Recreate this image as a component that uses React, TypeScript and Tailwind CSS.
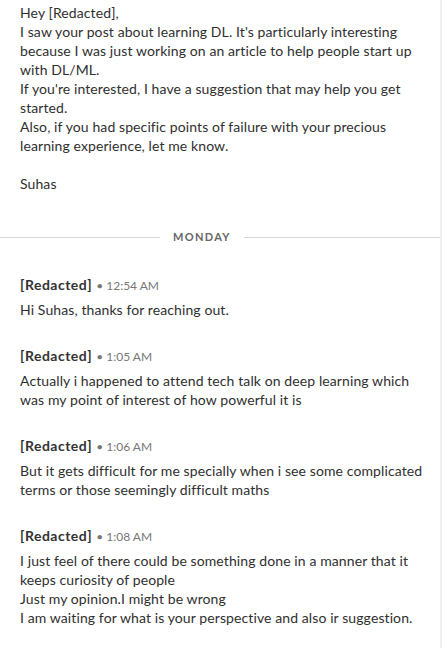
import React from "react";

interface Message {
  author: string;
  time: string;
  body: string;
}

const intro = `Hey [Redacted],
I saw your post about learning DL. It's particularly interesting because I was just working on an article to help people start up with DL/ML.
If you're interested, I have a suggestion that may help you get started.
Also, if you had specific points of failure with your precious learning experience, let me know.

Suhas`;

const messages: Message[] = [
  {
    author: "[Redacted]",
    time: "12:54 AM",
    body: "Hi Suhas, thanks for reaching out.",
  },
  {
    author: "[Redacted]",
    time: "1:05 AM",
    body: "Actually i happened to attend tech talk on deep learning which was my point of interest of how powerful it is",
  },
  {
    author: "[Redacted]",
    time: "1:06 AM",
    body: "But it gets difficult for me specially when i see some complicated terms or those seemingly difficult maths",
  },
  {
    author: "[Redacted]",
    time: "1:08 AM",
    body: "I just feel of there could be something done in a manner that it keeps curiosity of people\nJust my opinion.I might be wrong\nI am waiting for what is your perspective and also ir suggestion.",
  },
];

function App() {
  return (
    <div
      className="flex h-[648px] w-[442px] overflow-hidden bg-white text-[#2f2f2f]"
      style={{ fontFamily: "Lato, 'Open Sans', sans-serif" }}
    >
      <div className="flex-1">
        {/* first message, sent before the day break */}
        <p className="whitespace-pre-line pt-[3px] pl-5 pr-[4px] text-[14px] leading-[19px] tracking-[0.1px]">
          {intro}
        </p>

        {/* day divider */}
        <div className="mt-[34px] flex h-5 items-center">
          <div className="h-px w-[160px] bg-[#d6d6d6]" />
          <span className="px-[13px] text-[11px] font-bold tracking-[0.12em] text-[#666]">
            MONDAY
          </span>
          <div className="h-px flex-1 bg-[#d6d6d6]" />
        </div>

        <div className="pt-[28px]">
          {messages.map((m, i) => (
            <div key={i} className={i === 0 ? "" : "mt-[27px]"}>
              <div className="flex items-baseline px-5 leading-5">
                <span className="text-[14px] font-bold tracking-[0.5px] text-[#333]">{m.author}</span>
                <span className="ml-1 text-[12px] text-[#777]">• {m.time}</span>
              </div>
              <p className="mt-1 whitespace-pre-line pl-5 pr-[4px] text-[14px] leading-[19px] tracking-[0.1px]">
                {m.body}
              </p>
            </div>
          ))}
        </div>
      </div>
      <div className="w-[2px] bg-[#eef0f3]" />
    </div>
  );
}

export default App;
